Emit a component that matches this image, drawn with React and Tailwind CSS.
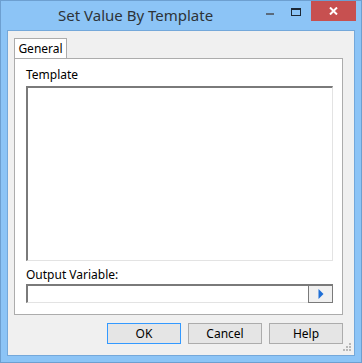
import React from "react";

const font = { fontFamily: '"Noto Sans", "Open Sans", sans-serif' };

export default function App() {
  return (
    <div
      className="w-[362px] h-[363px] border border-[#6d9fd0] bg-[#8cc4f6] flex flex-col text-[12px] text-black"
      style={font}
    >
      {/* title bar */}
      <div className="h-[29px] flex items-start relative">
        <div className="absolute left-[57px] top-[4px] text-[15px] leading-[20px] text-[#2e3338]">
          Set Value By Template
        </div>
        <div className="ml-auto flex items-start">
          <div className="w-[26px] h-[20px] flex items-center justify-center mt-0 mr-[0px]">
            <div className="w-[8px] h-[2px] bg-[#5a6a7c] mt-[6px]"></div>
          </div>
          <div className="w-[26px] h-[20px] flex items-start justify-center mr-[2px]">
            <div className="w-[10px] h-[8px] border border-t-2 border-[#1d2835] mt-[7px]"></div>
          </div>
          <div className="w-[45px] h-[20px] bg-[#c75050] flex items-center justify-center mr-[5px]">
            <svg width="9" height="8" viewBox="0 0 9 8">
              <path d="M1 0.5 L8 7.5 M8 0.5 L1 7.5" stroke="#fff" strokeWidth="2" />
            </svg>
          </div>
        </div>
      </div>
      {/* client */}
      <div className="mx-[6px] mb-[6px] flex-1 border border-[#74a8da] bg-[#f0f0f0] flex flex-col">
        <div className="pl-[6px] pr-[11px] pt-[7px] flex flex-col">
          {/* tab header */}
          <div className="flex">
            <div className="w-[53px] h-[21px] border border-b-0 border-[#acacac] bg-white flex items-center justify-center leading-[16px]">
              General
            </div>
          </div>
          {/* panel */}
          <div className="h-[257px] border border-[#acacac] bg-white px-[11px] flex flex-col -mt-px">
            <div className="h-[27px] pt-[8px] leading-[16px]">Template</div>
            <div className="h-[175px] border-t-2 border-l-2 border-[#7a7a7a] border-r border-b border-r-[#e3e3e3] border-b-[#e3e3e3] bg-white mr-[-2px]"></div>
            <div className="h-[23px] pt-[6px] leading-[16px]">Output Variable:</div>
            <div className="h-[19px] flex mr-[-2px]">
              <div className="flex-1 border-t-2 border-l-2 border-[#7a7a7a] border-b border-b-[#e3e3e3] bg-white"></div>
              <div className="w-[25px] border border-[#7a7a7a] border-t-2 bg-[#f0f0f0] flex items-center justify-center">
                <svg width="6" height="10" viewBox="0 0 6 10">
                  <path d="M0.5 0 L5.5 5 L0.5 10 Z" fill="#1f6fd6" />
                </svg>
              </div>
            </div>
          </div>
        </div>
        {/* buttons */}
        <div className="flex justify-end gap-[7px] pr-[11px] mt-[8px] relative">
          <button className="w-[74px] h-[21px] border border-[#3399ff] bg-[#e5e5e5] leading-[16px]">OK</button>
          <button className="w-[74px] h-[21px] border border-[#acacac] bg-[#e5e5e5] leading-[16px]">Cancel</button>
          <button className="w-[74px] h-[21px] border border-[#acacac] bg-[#e5e5e5] leading-[16px]">Help</button>
          <svg className="absolute right-[2px] top-[20px]" width="9" height="9" viewBox="0 0 9 9">
            <rect x="6" y="0" width="2" height="2" fill="#b8b8b8" />
            <rect x="3" y="3" width="2" height="2" fill="#b8b8b8" />
            <rect x="6" y="3" width="2" height="2" fill="#b8b8b8" />
            <rect x="0" y="6" width="2" height="2" fill="#b8b8b8" />
            <rect x="3" y="6" width="2" height="2" fill="#b8b8b8" />
            <rect x="6" y="6" width="2" height="2" fill="#b8b8b8" />
          </svg>
        </div>
      </div>
    </div>
  );
}
